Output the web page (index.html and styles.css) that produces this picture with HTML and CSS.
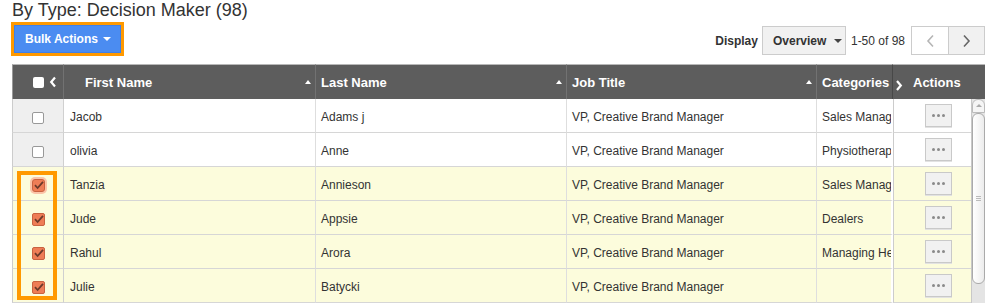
FILE: index.html
```html
<!DOCTYPE html>
<html lang="en">

<head>
    <meta charset="UTF-8">
    <title>By Type: Decision Maker</title>
    <link rel="stylesheet" href="styles.css">
</head>

<body>
    <div class="page">
        <h1 class="page-title">By Type: Decision Maker (98)</h1>

        <div class="toolbar">
            <div class="bulk-outline">
                <button class="bulk-btn">Bulk Actions<span class="caret"></span></button>
            </div>
            <div class="view-controls">
                <span class="display-label">Display</span>
                <button class="select-btn">Overview<span class="caret dark"></span></button>
                <span class="range">1-50 of 98</span>
                <div class="pager">
                    <button class="pager-btn prev">
                        <svg width="9" height="14" viewBox="0 0 9 14"><path d="M7 1.5L2 7l5 5.5" stroke="#b5b5b5" stroke-width="1.6" fill="none"/></svg>
                    </button>
                    <button class="pager-btn next">
                        <svg width="9" height="14" viewBox="0 0 9 14"><path d="M2 1.5L7 7l-5 5.5" stroke="#666" stroke-width="1.6" fill="none"/></svg>
                    </button>
                </div>
            </div>
        </div>

        <div class="grid-wrap">
            <table class="grid">
                <thead>
                    <tr>
                        <th class="col-check">
                            <div class="th-inner check-head">
                                <span class="head-box"></span>
                                <svg width="8" height="12" viewBox="0 0 8 12"><path d="M6 1.5L2.2 6 6 10.5" stroke="#fff" stroke-width="2.2" fill="none"/></svg>
                            </div>
                        </th>
                        <th class="col-first">
                            <div class="th-inner"><span>First Name</span><span class="sort-up"></span></div>
                        </th>
                        <th class="col-last">
                            <div class="th-inner"><span>Last Name</span><span class="sort-up"></span></div>
                        </th>
                        <th class="col-job">
                            <div class="th-inner"><span>Job Title</span><span class="sort-up"></span></div>
                        </th>
                        <th class="col-cat">
                            <div class="th-inner"><span>Categories</span></div>
                        </th>
                        <th class="col-actions">
                            <div class="th-inner actions-head">
                                <svg width="8" height="12" viewBox="0 0 8 12"><path d="M2 2l3.8 4.5L2 11" stroke="#fff" stroke-width="2.2" fill="none"/></svg>
                                <span>Actions</span>
                            </div>
                        </th>
                    </tr>
                </thead>
                <tbody>
                    <tr>
                        <td class="cell-check"><span class="cb"></span></td>
                        <td class="cell-first">Jacob</td>
                        <td>Adams j</td>
                        <td>VP, Creative Brand Manager</td>
                        <td class="cell-cat">Sales Manager</td>
                        <td class="cell-actions"><span class="more-btn"><i></i><i></i><i></i></span></td>
                    </tr>
                    <tr>
                        <td class="cell-check"><span class="cb"></span></td>
                        <td class="cell-first">olivia</td>
                        <td>Anne</td>
                        <td>VP, Creative Brand Manager</td>
                        <td class="cell-cat">Physiotherapist</td>
                        <td class="cell-actions"><span class="more-btn"><i></i><i></i><i></i></span></td>
                    </tr>
                    <tr class="is-selected">
                        <td class="cell-check"><span class="cb checked focused"><svg width="13" height="13" viewBox="0 0 13 13"><path d="M3 6.2l2.6 2.8L11 2.8" stroke="#6b3a2a" stroke-width="1.8" fill="none"/></svg></span></td>
                        <td class="cell-first">Tanzia</td>
                        <td>Annieson</td>
                        <td>VP, Creative Brand Manager</td>
                        <td class="cell-cat">Sales Manager</td>
                        <td class="cell-actions"><span class="more-btn"><i></i><i></i><i></i></span></td>
                    </tr>
                    <tr class="is-selected">
                        <td class="cell-check"><span class="cb checked"><svg width="13" height="13" viewBox="0 0 13 13"><path d="M3 6.2l2.6 2.8L11 2.8" stroke="#6b3a2a" stroke-width="1.8" fill="none"/></svg></span></td>
                        <td class="cell-first">Jude</td>
                        <td>Appsie</td>
                        <td>VP, Creative Brand Manager</td>
                        <td class="cell-cat">Dealers</td>
                        <td class="cell-actions"><span class="more-btn"><i></i><i></i><i></i></span></td>
                    </tr>
                    <tr class="is-selected">
                        <td class="cell-check"><span class="cb checked"><svg width="13" height="13" viewBox="0 0 13 13"><path d="M3 6.2l2.6 2.8L11 2.8" stroke="#6b3a2a" stroke-width="1.8" fill="none"/></svg></span></td>
                        <td class="cell-first">Rahul</td>
                        <td>Arora</td>
                        <td>VP, Creative Brand Manager</td>
                        <td class="cell-cat">Managing Head</td>
                        <td class="cell-actions"><span class="more-btn"><i></i><i></i><i></i></span></td>
                    </tr>
                    <tr class="is-selected">
                        <td class="cell-check"><span class="cb checked"><svg width="13" height="13" viewBox="0 0 13 13"><path d="M3 6.2l2.6 2.8L11 2.8" stroke="#6b3a2a" stroke-width="1.8" fill="none"/></svg></span></td>
                        <td class="cell-first">Julie</td>
                        <td>Batycki</td>
                        <td>VP, Creative Brand Manager</td>
                        <td class="cell-cat"></td>
                        <td class="cell-actions"><span class="more-btn"><i></i><i></i><i></i></span></td>
                    </tr>
                </tbody>
            </table>

            <div class="scrollbar">
                <div class="sb-up"><span class="sb-arrow"></span></div>
                <div class="sb-thumb"><span class="sb-grip"></span></div>
            </div>

            <div class="select-highlight"></div>
        </div>
    </div>
</body>

</html>
```

FILE: styles.css
```css
* {
    box-sizing: border-box;
}

body {
    margin: 0;
    font-family: "Liberation Sans", Arial, sans-serif;
    color: #333;
    background: #fff;
    overflow: hidden;
}

button {
    font-family: inherit;
    cursor: pointer;
}

.page {
    width: 973px;
    margin-left: 12px;
}

.page-title {
    margin: 0;
    font-size: 18px;
    font-weight: normal;
    line-height: 20px;
    color: #333;
}

/* toolbar */

.toolbar {
    display: flex;
    justify-content: space-between;
    align-items: flex-start;
    height: 34px;
    margin-top: 2px;
}

.bulk-outline {
    margin-left: -1px;
    border: 3px solid #f90;
}

.bulk-btn {
    display: flex;
    align-items: center;
    width: 107px;
    height: 28px;
    padding: 0 0 0 10px;
    border: 1px solid #3f80e8;
    background: #4b8cf1;
    color: #fff;
    font-size: 12px;
    font-weight: bold;
}

.caret {
    display: inline-block;
    margin-left: 5px;
    border-top: 4px solid #fff;
    border-left: 4px solid transparent;
    border-right: 4px solid transparent;
}

.caret.dark {
    margin-left: 8px;
    border-top-color: #444;
}

.view-controls {
    display: flex;
    align-items: center;
    margin-top: 4px;
    font-size: 12px;
}

.display-label {
    font-weight: bold;
    margin-right: 4px;
}

.select-btn {
    display: flex;
    align-items: center;
    height: 29px;
    width: 84px;
    padding: 0 0 0 10px;
    border: 1px solid #ccc;
    background: #f1f1f1;
    color: #333;
    font-size: 12px;
    font-weight: bold;
}

.range {
    margin: 0 6px 0 5px;
}

.pager {
    display: flex;
}

.pager-btn {
    display: flex;
    align-items: center;
    justify-content: center;
    width: 37px;
    height: 29px;
    padding: 0;
    border: 1px solid #ccc;
    background: #f1f1f1;
}

.pager-btn.prev {
    background: #fff;
    border-right: none;
}

/* grid */

.grid-wrap {
    position: relative;
    margin-top: 8px;
}

.grid {
    width: 973px;
    table-layout: fixed;
    border-collapse: separate;
    border-spacing: 0;
}

.grid th {
    height: 35px;
    padding: 0 4px 0 5px;
    background: #5d5d5d;
    color: #fff;
    font-size: 13px;
    font-weight: bold;
    text-align: left;
    border-top: 1px solid #b8b8b8;
    border-right: 1px solid #727272;
    white-space: nowrap;
    overflow: hidden;
}

.th-inner {
    display: flex;
    align-items: center;
    justify-content: space-between;
}

.sort-up {
    border-bottom: 4px solid #fff;
    border-left: 3px solid transparent;
    border-right: 3px solid transparent;
}

.col-check { width: 52px; }
.col-first { width: 252px; }
.col-last { width: 251px; }
.col-job { width: 250px; }
.col-cat { width: 76px; }
.col-actions { width: 92px; }

.grid th.col-check {
    border-left: 1px solid #999;
    padding-right: 6px;
}

.check-head {
    justify-content: flex-end;
    gap: 5px;
}

.head-box {
    width: 11px;
    height: 11px;
    border-radius: 2px;
    background: #fff;
}

.grid th.col-first {
    padding-left: 21px;
}

.grid th.col-cat {
    border-right: 1px solid #484848;
}

.grid th.col-actions {
    border-right: none;
    padding-left: 2px;
}

.actions-head {
    justify-content: flex-start;
    gap: 10px;
}

.actions-head svg {
    margin-top: 5px;
}

.grid td {
    height: 34px;
    padding: 3px 5px 0;
    font-size: 12px;
    color: #333;
    border-bottom: 1px solid #d6d6d6;
    border-right: 1px solid #dedede;
    white-space: nowrap;
    overflow: hidden;
}

.grid td.cell-check {
    background: #efefef;
    border-left: 1px solid #ccc;
    border-right-color: #d0d0d0;
    text-align: center;
    padding: 3px 0 0;
}

.grid td.cell-first {
    padding-left: 6px;
}

.grid td.cell-cat {
    border-right: 2px solid #fff;
}

.grid td.cell-actions {
    border-left: 1px solid #ccc;
    border-right: none;
    padding: 0 0 0 31px;
}

.grid tr.is-selected td {
    background: #fcfcdc;
}

.cb {
    display: inline-block;
    width: 12px;
    height: 12px;
    vertical-align: middle;
    border: 1px solid #999;
    border-radius: 2px;
    background: #fff;
}

.cb.checked {
    position: relative;
    width: 13px;
    height: 13px;
    border-color: #c96240;
    background: #ee7d56;
}

.cb.checked svg {
    position: absolute;
    left: -1px;
    top: -1px;
}

.cb.focused {
    box-shadow: 0 0 0 2px #fbc4a8;
    border-radius: 3px;
}

.more-btn {
    display: inline-flex;
    align-items: center;
    justify-content: center;
    gap: 2px;
    width: 27px;
    height: 23px;
    vertical-align: middle;
    border: 1px solid #c9c9c9;
    background: #f1f1f1;
    box-shadow: 0 1px 0 #e2e2e2;
}

.more-btn i {
    width: 3px;
    height: 3px;
    border-radius: 50%;
    background: #8a8a8a;
}

/* scrollbar sits over the actions column */

.scrollbar {
    position: absolute;
    right: 0;
    top: 35px;
    bottom: 0;
    width: 14px;
    background: #e4e4e4;
    border-left: 1px solid #c8c8c8;
}

.sb-up {
    display: flex;
    justify-content: center;
    height: 14px;
    padding-top: 4px;
    border: 1px solid #bbb;
    border-radius: 6px 6px 0 0;
    background: #f5f5f5;
}

.sb-arrow {
    width: 0;
    height: 0;
    border-bottom: 3px solid #aaa;
    border-left: 3px solid transparent;
    border-right: 3px solid transparent;
}

.sb-thumb {
    display: flex;
    align-items: center;
    justify-content: center;
    height: 171px;
    border: 1px solid #aaa;
    border-radius: 6px;
    background: linear-gradient(to right, #fff, #ececec);
}

.sb-grip {
    width: 5px;
    height: 5px;
    border-top: 1px solid #bbb;
    border-bottom: 1px solid #bbb;
    background: linear-gradient(#bbb, #bbb) center / 100% 1px no-repeat;
}

/* annotation box around selected checkboxes */

.select-highlight {
    position: absolute;
    left: 5px;
    top: 107px;
    width: 40px;
    height: 129px;
    border: 4px solid #f90;
}
```
